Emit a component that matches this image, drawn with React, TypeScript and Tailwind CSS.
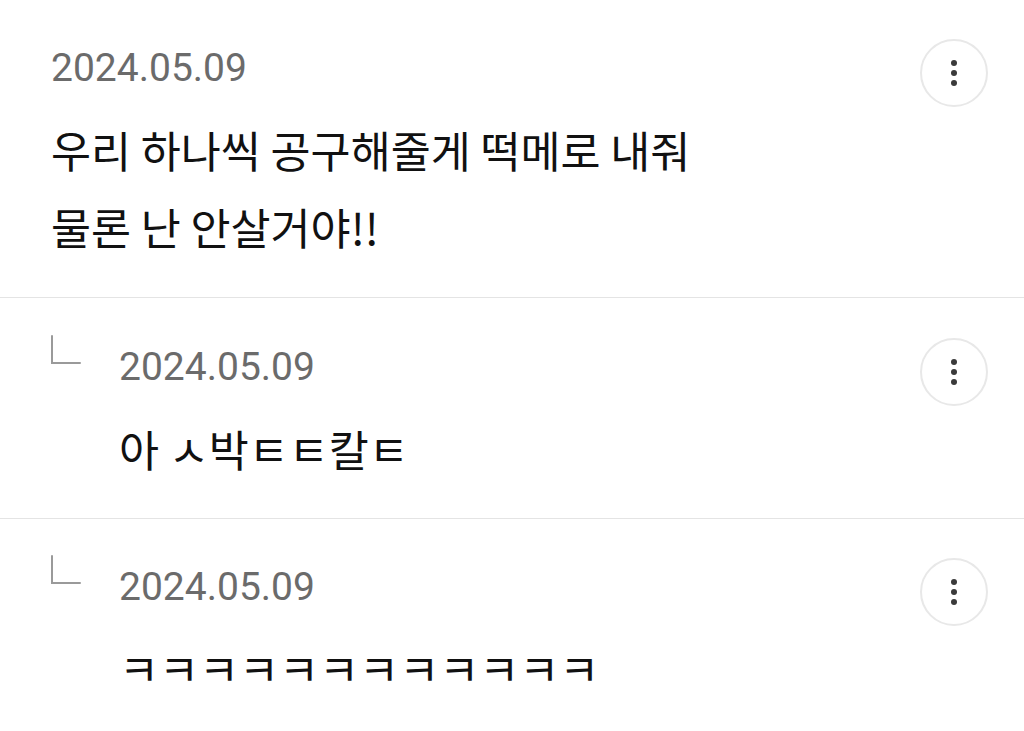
import React from "react";

const MoreButton = () => (
  <button className="flex h-[68px] w-[68px] shrink-0 flex-col items-center justify-center gap-[4px] rounded-full border-2 border-[#e8e8e8] bg-white">
    <span className="block h-[6px] w-[6px] rounded-full bg-[#3a3a3a]" />
    <span className="block h-[6px] w-[6px] rounded-full bg-[#3a3a3a]" />
    <span className="block h-[6px] w-[6px] rounded-full bg-[#3a3a3a]" />
  </button>
);

const ReplyIcon = () => (
  <svg width="34" height="32" viewBox="0 0 34 32" className="block">
    <path d="M2 1 V28 H30" fill="none" stroke="#9a9a9a" strokeWidth="2" strokeLinecap="round" />
  </svg>
);

const dateCls =
  "text-[39px] leading-[46px] text-[#6b6b6b] font-['Roboto','Noto_Sans_CJK_KR',sans-serif]";
const bodyCls =
  "text-[43.5px] leading-[77px] text-[#111111] font-['Noto_Sans_CJK_KR','Noto_Sans',sans-serif]";

export default function App() {
  return (
    <div className="min-h-[731px] w-[1024px] bg-white">
      {/* Comment */}
      <div className="flex items-start justify-between border-b border-[#e4e4e4] pb-[32px] pl-[51px] pr-[36px] pt-[39px]">
        <div className="pt-[6px]">
          <div className={dateCls}>2024.05.09</div>
          <div className={`mt-[20px] ${bodyCls}`}>
            <div>우리 하나씩 공구해줄게 떡메로 내줘</div>
            <div>물론 난 안살거야!!</div>
          </div>
        </div>
        <MoreButton />
      </div>

      {/* Reply 1 */}
      <div className="flex items-start justify-between border-b border-[#e4e4e4] pb-[31px] pl-[50px] pr-[36px] pt-[40px]">
        <div className="flex">
          <div className="-mt-[3px] w-[69px]">
            <ReplyIcon />
          </div>
          <div className="pt-[6px]">
            <div className={dateCls}>2024.05.09</div>
            <div className={`mt-[20px] ${bodyCls}`}>아 ㅅ박ㅌㅌ칼ㅌ</div>
          </div>
        </div>
        <MoreButton />
      </div>

      {/* Reply 2 */}
      <div className="flex items-start justify-between pb-[25px] pl-[50px] pr-[36px] pt-[39px]">
        <div className="flex">
          <div className="-mt-[3px] w-[69px]">
            <ReplyIcon />
          </div>
          <div className="pt-[6px]">
            <div className={dateCls}>2024.05.09</div>
            <div className={`mt-[19px] ${bodyCls}`}>ㅋㅋㅋㅋㅋㅋㅋㅋㅋㅋㅋㅋ</div>
          </div>
        </div>
        <MoreButton />
      </div>
    </div>
  );
}
